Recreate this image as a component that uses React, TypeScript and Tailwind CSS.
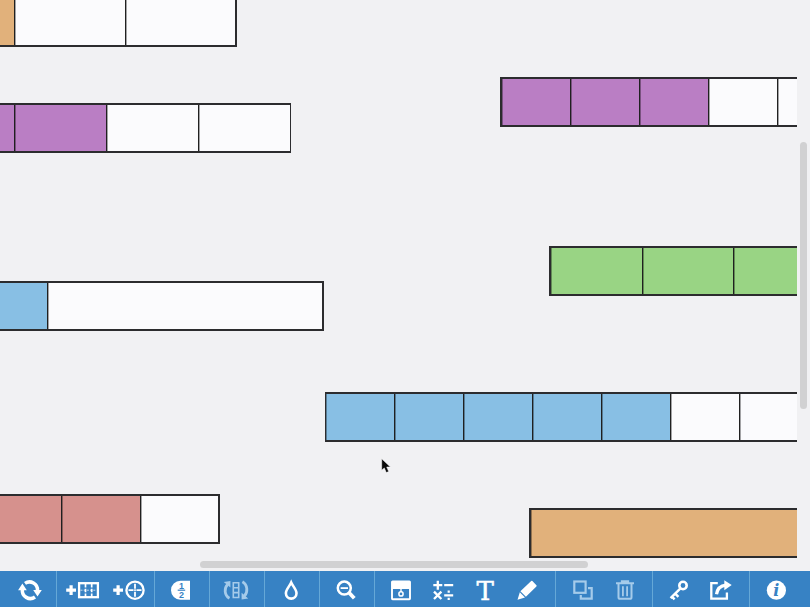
import type { ReactNode } from "react";

const WHITE = "bg-[#fbfbfd]";
const PURPLE = "bg-[#ba7ec4]";
const BLUE = "bg-[#88bfe4]";
const GREEN = "bg-[#99d484]";
const RED = "bg-[#d6918d]";
const ORANGE = "bg-[#e1b17b]";

type Bar = { place: string; cells: string[] };

const bars: Bar[] = [
  { place: "left-[-97px] top-[-3px] w-[334px] border-2", cells: [ORANGE, WHITE, WHITE] },
  { place: "left-[-79px] top-[103px] w-[370px] border-2 border-r", cells: [PURPLE, PURPLE, WHITE, WHITE] },
  { place: "left-[500px] top-[77px] w-[555px] border-2", cells: [PURPLE, PURPLE, PURPLE, WHITE, WHITE, WHITE, WHITE, WHITE] },
  { place: "left-[549px] top-[246px] w-[278px] border-2", cells: [GREEN, GREEN, GREEN] },
  { place: "left-[-229px] top-[281px] w-[553px] border-2", cells: [BLUE, WHITE] },
  { place: "left-[325px] top-[392px] w-[554px] border-2 border-l", cells: [BLUE, BLUE, BLUE, BLUE, BLUE, WHITE, WHITE, WHITE] },
  { place: "left-[-97px] top-[494px] w-[317px] border-2", cells: [RED, RED, RED, WHITE] },
  { place: "left-[529px] top-[508px] w-[555px] border-2", cells: [ORANGE] },
];

function FractionBar({ place, cells }: Bar) {
  return (
    <div className={`absolute flex h-[50px] border-[#2c2c2e] ${place}`}>
      {cells.map((color, i) => (
        <div
          key={i}
          className={`flex-1 shadow-[inset_1px_0_0_rgba(0,0,0,0.35)] ${color} ${i < cells.length - 1 ? "border-r border-[#202020]" : ""}`}
        />
      ))}
    </div>
  );
}

function Icon({ w, dim, children, cls = "" }: { w: number; dim?: boolean; children: ReactNode; cls?: string }) {
  return (
    <button className={`flex shrink-0 justify-center ${dim ? "text-[#a5cbea]" : "text-white"} ${cls}`}>
      <svg className="overflow-visible" width={w} height="20" viewBox={`0 0 ${w} 20`} fill="none" stroke="currentColor" strokeWidth="2.2">
        {children}
      </svg>
    </button>
  );
}

function Group({ width, children, last }: { width: string; children: ReactNode; last?: boolean }) {
  return (
    <div className={`flex h-full shrink-0 items-start pt-[9px] ${width} ${last ? "" : "border-r border-[#65a8d7]"}`}>
      {children}
    </div>
  );
}

function Toolbar() {
  return (
    <div className="flex h-9 shrink-0 bg-[#3782c4]">
      <Group width="w-[57px]">
        <Icon w={24} cls="ml-[18px]">
          <path d="M7 3.4A8 8 0 0 1 19.5 10.5M17 17A8 8 0 0 1 4.4 9.5" strokeWidth="3.5" />
          <path d="M15.2 10h8.6l-4.3 6.4zM.1 10.2l4.3-6.6 4.4 6.6z" fill="currentColor" stroke="none" />
        </Icon>
      </Group>
      <Group width="w-[98px]">
        <Icon w={34} cls="ml-[9px]">
          <path d="M.2 10.2h9.8M5.1 5.3v9.8" strokeWidth="3.2" />
          <rect x="13.1" y="3.2" width="18.8" height="14" strokeWidth="2.3" />
          <path d="M19.5 4v13M25.7 4v13" strokeWidth="1.7" strokeDasharray="3.6 1.1" />
          <path d="M14.5 10.2h16" strokeWidth=".7" strokeDasharray="2 1.2" />
        </Icon>
        <Icon w={34} cls="ml-[13px]">
          <path d="M.2 10.2h9.8M5.1 5.3v9.8" strokeWidth="3.2" />
          <circle cx="22" cy="10.2" r="8.6" strokeWidth="2.3" />
          <path d="M15.5 10.2h13M22 3.7v13" strokeWidth="1.8" strokeDasharray="5 .9 1.2 .9 5" />
        </Icon>
      </Group>
      <Group width="w-[55px]">
        <Icon w={20} cls="ml-[16px]">
          <path d="M19 .7v19h-9.5a9.5 9.5 0 0 1 0-19z" fill="currentColor" stroke="none" />
          <path d="M6.7 10.2h7.5" stroke="#3782c4" strokeWidth="1.2" />
          <g className="fill-[#3782c4] font-['Liberation_Sans'] text-[9px] font-bold" stroke="none" textAnchor="middle">
            <text x="10.5" y="8.7">1</text>
            <text x="10.5" y="17.8">2</text>
          </g>
        </Icon>
      </Group>
      <Group width="w-[55px]">
        <Icon w={26} dim cls="ml-[13px]">
          <path d="M6.5 18.3C1.2 15.5 1 8 4.6 4.4M19.4 1.8c5.3 3 5.7 10.5 2 14.1" strokeWidth="2.8" />
          <path d="M.8 2l6.6-1v6.6zM25.2 18.4l-6.6 1v-6.6z" fill="currentColor" stroke="none" />
          <path d="M10.3 2.8h5.4v14.7h-5.4zM10.3 7.7h5.4M10.3 12.6h5.4" strokeWidth="1.6" />
        </Icon>
      </Group>
      <Group width="w-[55px]">
        <Icon w={14} cls="ml-[19px]">
          <path d="M7.2 2.6C5.7 6.1 1.9 9.3 1.9 13.3a5.3 5.3 0 0 0 10.6 0C12.5 9.3 8.7 6.1 7.2 2.6z" strokeWidth="2.6" />
        </Icon>
      </Group>
      <Group width="w-[55px]">
        <Icon w={20} cls="ml-[16px]">
          <circle cx="8.3" cy="8.1" r="6.5" strokeWidth="2.5" />
          <path d="M4.6 8.1H12" strokeWidth="1.8" />
          <path d="M12.6 12.3l5.7 6" strokeWidth="3.8" />
        </Icon>
      </Group>
      <Group width="w-[181px]">
        <Icon w={20} cls="ml-[16px]">
          <rect x="1" y="1.5" width="18" height="17.7" rx=".6" strokeWidth="1.9" />
          <path d="M1 1h18v8H1z" fill="currentColor" stroke="none" />
          <path d="M10 8v4" strokeWidth="1.4" />
          <circle cx="10" cy="13.9" r="2.1" strokeWidth="1.5" />
        </Icon>
        <Icon w={20} cls="ml-[22px]">
          <path d="M.3 5.2h9M4.8.7v9M11.2 5.2h9M1 11.6l7.4 7.4M8.4 11.6L1 19M11.2 15.3h9" strokeWidth="2.3" />
          <path d="M14.6 10.6h2.2v2.2h-2.2zM14.6 17.8h2.2v2.2h-2.2z" fill="currentColor" stroke="none" />
        </Icon>
        <Icon w={20} cls="ml-[22px]">
          <text x="10.2" y="19.8" textAnchor="middle" stroke="currentColor" strokeWidth=".5" fill="currentColor" className="font-['DejaVu_Serif'] text-[26px]">T</text>
        </Icon>
        <Icon w={20} cls="ml-[22px]">
          <path d="M14.2 1.1q.6-.6 1.2 0l4 4.1q.6.6 0 1.2L8.9 16.8l-5.5-5.5zM2.8 12.2l5.2 5.3L.5 19.8z" fill="currentColor" stroke="none" />
        </Icon>
      </Group>
      <Group width="w-[97px]">
        <Icon w={20} dim cls="ml-[17px]">
          <rect x="1.3" y="1.5" width="11.3" height="11.3" strokeWidth="2.2" />
          <path d="M15 8.1h3.7v10.5H7.8v-3.5" strokeWidth="2.2" />
        </Icon>
        <Icon w={20} dim cls="ml-[22px]">
          <path d="M1 3.3h18M6.8 3V1.2h6.4V3" strokeWidth="1.9" />
          <path d="M3.5 4v13.2q0 1.6 1.6 1.6h9.8q1.6 0 1.6-1.6V4" strokeWidth="2" />
          <path d="M7.9 6.3v9.9M12.1 6.3v9.9" strokeWidth="1.8" />
        </Icon>
      </Group>
      <Group width="w-[97px]">
        <Icon w={20} cls="ml-[16px]">
          <circle cx="14" cy="5.5" r="3.7" strokeWidth="2.6" />
          <path d="M11.2 8.6L1.6 18.1M6.2 13.6l3.2 3.2M2.8 16.6l2.8 2.8" strokeWidth="2.5" />
        </Icon>
        <Icon w={24} cls="ml-[20px]">
          <path d="M8.8 3.2H2.3v15.4h15.6v-6.2" strokeWidth="2.3" />
          <path d="M7.5 14.2C8.3 8.6 11.5 5.6 17 5.1" strokeWidth="3.2" />
          <path d="M15.3.2l7.4 4.8-7.4 5.3z" fill="currentColor" stroke="none" />
        </Icon>
      </Group>
      <Group width="w-[60px]" last>
        <Icon w={20} cls="ml-[16px]">
          <circle cx="10.4" cy="10.2" r="9.6" fill="currentColor" stroke="none" />
          <text x="10.2" y="15.8" textAnchor="middle" stroke="none" className="fill-[#3782c4] font-['DejaVu_Serif'] text-[16px] font-bold italic">i</text>
        </Icon>
      </Group>
    </div>
  );
}

export default function App() {
  return (
    <div className="flex h-[607px] w-[810px] flex-col overflow-hidden bg-[#f1f1f3]">
      <div className="flex h-[558px] shrink-0">
        <div className="relative w-[797px] shrink-0 overflow-hidden">
          {bars.map((bar) => (
            <FractionBar key={bar.place} {...bar} />
          ))}
          <svg className="absolute left-[381px] top-[458px]" width="11" height="16" viewBox="0 0 11 16">
            <path d="M.7.8v11.4l2.6-2.3 2 4.7 2.4-1-2-4.6h3.7z" fill="#080808" stroke="#fff" strokeWidth=".5" />
          </svg>
        </div>
        <div className="flex flex-1 pl-[3px] pt-[142px]">
          <div className="h-[267px] w-[7px] rounded-full bg-[#d1d1d2]" />
        </div>
      </div>
      <div className="flex h-[13px] shrink-0 pl-[200px] pt-[3px]">
        <div className="h-[7px] w-[388px] rounded-full bg-[#d1d1d2]" />
      </div>
      <Toolbar />
    </div>
  );
}
